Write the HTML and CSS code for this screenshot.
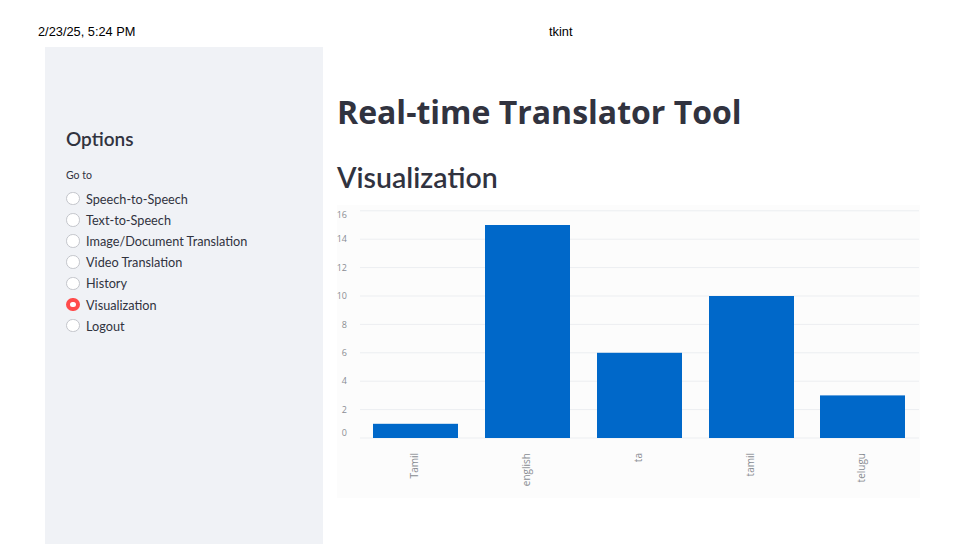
FILE: index.html
```html
<!DOCTYPE html>
<html lang="en">
<head>
<meta charset="utf-8">
<title>tkint</title>
<link rel="stylesheet" href="styles.css">
</head>
<body>
<header class="print-head">
  <span class="print-date">2/23/25, 5:24 PM</span>
  <span class="print-title">tkint</span>
</header>
<div class="app">
  <aside class="sidebar">
    <h3 class="side-title">Options</h3>
    <div class="radio-label">Go to</div>
    <ul class="radio-list">
      <li class="radio-item"><span class="radio"></span>Speech-to-Speech</li>
      <li class="radio-item"><span class="radio"></span>Text-to-Speech</li>
      <li class="radio-item"><span class="radio"></span>Image/Document Translation</li>
      <li class="radio-item"><span class="radio"></span>Video Translation</li>
      <li class="radio-item"><span class="radio"></span>History</li>
      <li class="radio-item"><span class="radio checked"></span>Visualization</li>
      <li class="radio-item"><span class="radio"></span>Logout</li>
    </ul>
  </aside>
  <main class="main">
    <h1 class="page-title">Real-time Translator Tool</h1>
    <h2 class="section-title">Visualization</h2>
    <div class="chart">
      <svg class="chart-svg" width="583" height="293" viewBox="0 0 583 293">
        <g class="grid">
          <line x1="23" x2="582" y1="5.8" y2="5.8"/>
          <line x1="23" x2="582" y1="34.2" y2="34.2"/>
          <line x1="23" x2="582" y1="62.6" y2="62.6"/>
          <line x1="23" x2="582" y1="91" y2="91"/>
          <line x1="23" x2="582" y1="119.4" y2="119.4"/>
          <line x1="23" x2="582" y1="147.8" y2="147.8"/>
          <line x1="23" x2="582" y1="176.2" y2="176.2"/>
          <line x1="23" x2="582" y1="204.6" y2="204.6"/>
          <line x1="23" x2="582" y1="233" y2="233"/>
        </g>
        <g class="ylabels">
          <text x="10" y="13">16</text>
          <text x="10" y="37.4">14</text>
          <text x="10" y="65.8">12</text>
          <text x="10" y="94.2">10</text>
          <text x="10" y="122.6">8</text>
          <text x="10" y="151">6</text>
          <text x="10" y="179.4">4</text>
          <text x="10" y="207.8">2</text>
          <text x="10" y="231">0</text>
        </g>
        <g class="bars">
          <rect x="36" y="218.8" width="85" height="14.2"/>
          <rect x="148" y="20" width="85" height="213"/>
          <rect x="260" y="147.8" width="85" height="85.2"/>
          <rect x="372" y="91" width="85" height="142"/>
          <rect x="483" y="190.4" width="85" height="42.6"/>
        </g>
        <g class="xlabels">
          <text transform="translate(78.5 248) rotate(-90)">Tamil</text>
          <text transform="translate(190.5 248) rotate(-90)">english</text>
          <text transform="translate(302.5 248) rotate(-90)">ta</text>
          <text transform="translate(414.5 248) rotate(-90)">tamil</text>
          <text transform="translate(525.5 248) rotate(-90)">telugu</text>
        </g>
      </svg>
    </div>
  </main>
</div>
</body>
</html>
```
FILE: styles.css
```css
* { box-sizing: border-box; }
html, body { margin: 0; padding: 0; background: #ffffff; }
body { width: 975px; height: 544px; overflow: hidden; }

.print-head {
  display: flex;
  align-items: center;
  height: 47px;
  padding: 16px 0 0 38px;
  font-family: "Liberation Sans", Arial, sans-serif;
  font-size: 12.8px;
  color: #000;
}
.print-date { width: 511px; }

.app {
  display: flex;
  height: 497px;
  margin-left: 45px;
  font-family: "Lato", "Open Sans", sans-serif;
  color: #31333f;
}

.sidebar {
  width: 278px;
  background: #f0f2f6;
  padding: 77px 0 0 21px;
}
.side-title {
  margin: 0;
  font-size: 19px;
  font-weight: 600;
  line-height: 30px;
}
.radio-label {
  margin-top: 14px;
  font-size: 10.5px;
  line-height: 14px;
}
.radio-list {
  list-style: none;
  margin: 6px 0 0;
  padding: 0;
}
.radio-item {
  display: flex;
  align-items: center;
  height: 21.2px;
  font-size: 12.7px;
}
.radio {
  width: 13.5px;
  height: 13.5px;
  border-radius: 50%;
  border: 1px solid #c3c5cb;
  background: #ffffff;
  margin: 0 6.5px 0 0;
  flex: none;
}
.radio.checked {
  border: 4px solid #ff4b4b;
  background: #ffffff;
}

.main {
  padding: 45px 0 0 14px;
}
.page-title {
  margin: 0;
  font-family: "Open Sans", sans-serif;
  font-size: 32px;
  font-weight: 700;
  line-height: 40px;
  letter-spacing: 0;
}
.section-title {
  margin: 28px 0 0;
  font-size: 28.5px;
  font-weight: 600;
  line-height: 34px;
}
.chart {
  margin-top: 11px;
  width: 583px;
  height: 293px;
  background: #fcfcfc;
}
.chart-svg { display: block; }
.grid line { stroke: #eceef1; stroke-width: 1; }
.ylabels text {
  font-family: "Open Sans", sans-serif;
  font-size: 9px;
  fill: #8a8d93;
  text-anchor: end;
}
.bars rect { fill: #0068c9; }
.xlabels text {
  font-family: "Open Sans", sans-serif;
  font-size: 10px;
  fill: #8a8d93;
  text-anchor: end;
  dominant-baseline: middle;
}
```
